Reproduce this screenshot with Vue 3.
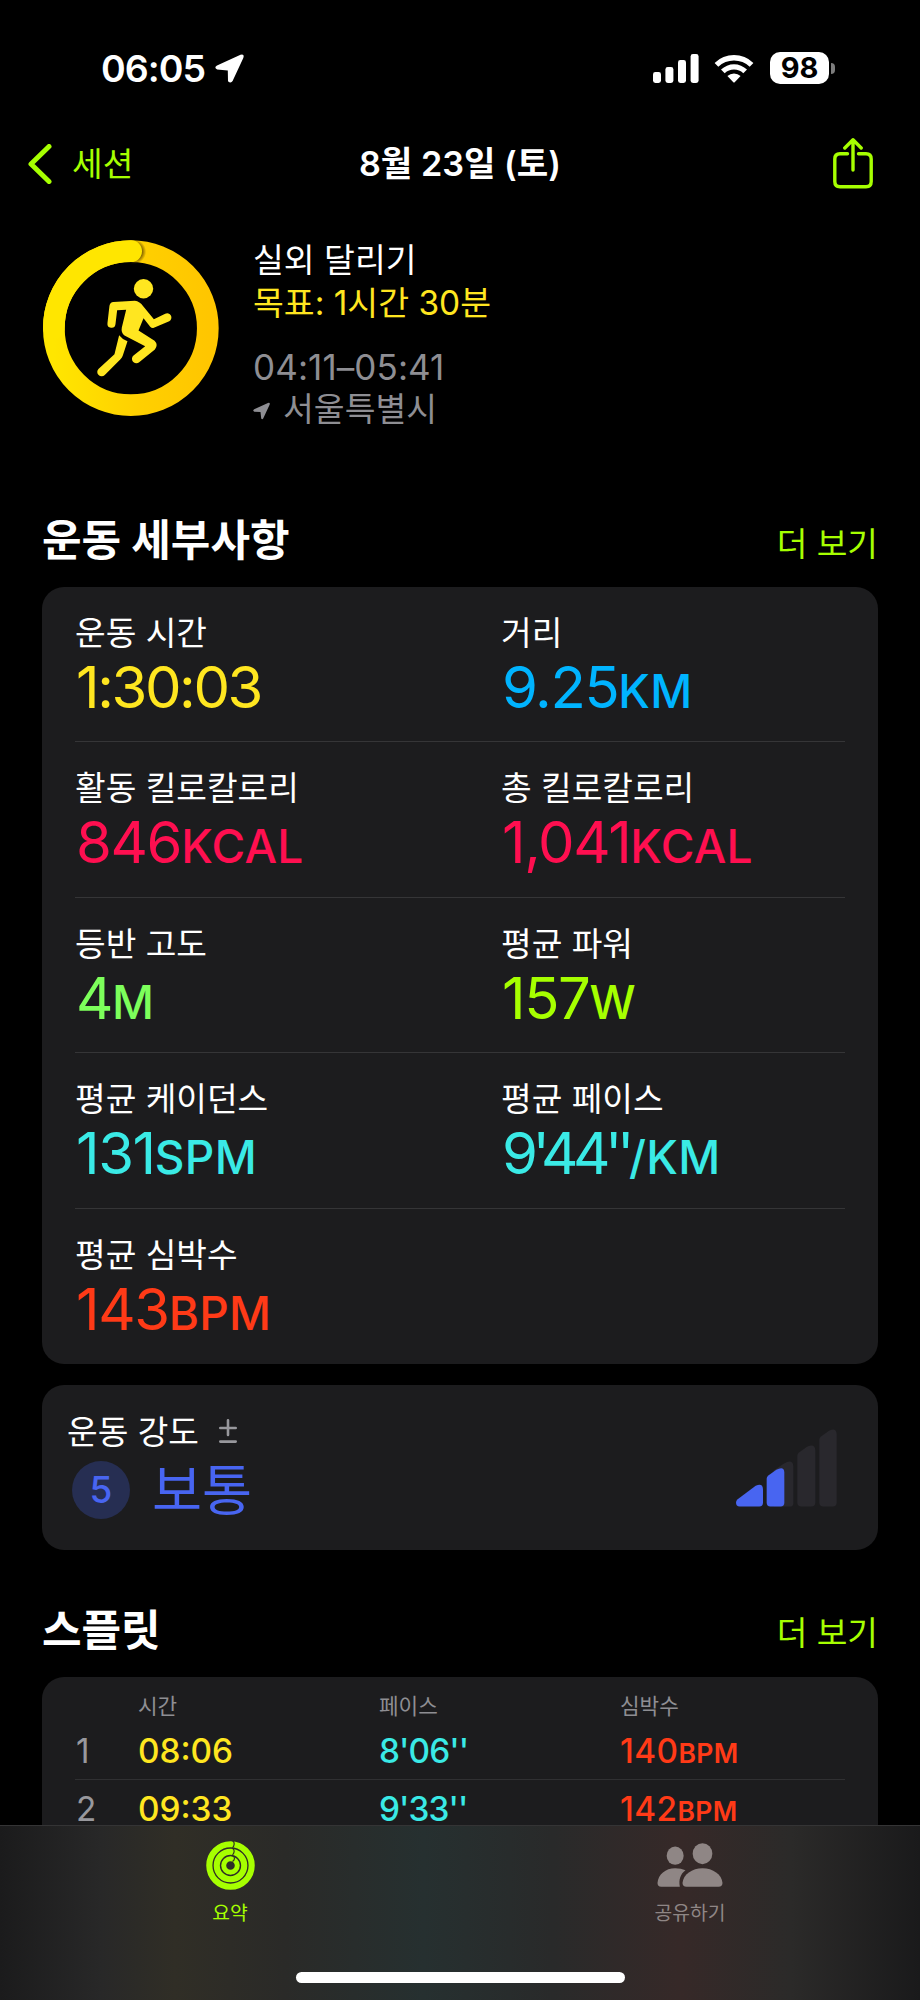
<template>
  <div class="screen">
    <div class="status-bar">
      <div class="status-left">
        <span class="clock">06:05</span>
        <svg class="arrow-icon" viewBox="0 0 29 29">
          <path d="M2 11.5 25.5 .8Q29.8-.4 28.3 4L17.6 27Q15.9 29.8 13 27.3L12.8 16.4 2.2 15.6Q-1.4 13.8 2 11.5Z" />
        </svg>
      </div>
      <div class="status-right">
        <svg class="signal-icon" viewBox="0 0 46 29">
          <rect x="0" y="18" width="8" height="11" rx="2.4" />
          <rect x="12.4" y="13" width="8" height="16" rx="2.4" />
          <rect x="25" y="6" width="8" height="23" rx="2.4" />
          <rect x="37.6" y="0" width="8" height="29" rx="2.4" />
        </svg>
        <svg class="wifi-icon" viewBox="0 0 40 29">
          <path d="M.6 8.9A28 28 0 0 1 39.4 8.9L35.7 12.8A22.6 22.6 0 0 0 4.3 12.8Z" />
          <path d="M7 15.5A18.8 18.8 0 0 1 33 15.5L29.3 19.3A13.5 13.5 0 0 0 10.7 19.3Z" />
          <path d="M13.4 22.1A9.6 9.6 0 0 1 26.6 22.1L20.7 28.2Q20 29 19.3 28.2Z" />
        </svg>
        <div class="battery">
          <span class="battery-body">98</span>
          <span class="battery-tip"></span>
        </div>
      </div>
    </div>

    <div class="nav-bar">
      <div class="nav-back">
        <svg class="chevron-icon" viewBox="0 0 24 40">
          <path d="M21 2.5 3 20 21 37.5" />
        </svg>
        <span class="nav-back-text">세션</span>
      </div>
      <h1 class="nav-title">8월 23일 (토)</h1>
      <svg class="share-icon" viewBox="0 0 40 51">
        <path d="M14.5 15.8H7Q1.8 15.8 1.8 21V43.5Q1.8 48.7 7 48.7H33Q38.2 48.7 38.2 43.5V21Q38.2 15.8 33 15.8H25.5" />
        <path d="M20 32V2.2M11.8 10 20 1.8 28.2 10" />
      </svg>
    </div>

    <div class="content">
      <section class="workout">
        <svg class="goal-ring" viewBox="70 60 527 527">
          <defs>
            <linearGradient id="ringFill" x1="1" y1="0" x2="0" y2="0">
              <stop offset="0" stop-color="#ffc600" />
              <stop offset="0.45" stop-color="#ffd000" />
              <stop offset="1" stop-color="#ffe600" />
            </linearGradient>
            <radialGradient id="capShade">
              <stop offset="0.6" stop-color="#5a4000" stop-opacity="0.9" />
              <stop offset="1" stop-color="#5a4000" stop-opacity="0" />
            </radialGradient>
          </defs>
          <circle cx="333" cy="324" r="230.5" fill="none" stroke="url(#ringFill)" stroke-width="65" />
          <circle cx="342" cy="95" r="37" fill="url(#capShade)" />
          <path d="M102.5 324A230.5 230.5 0 0 1 334 93.5" fill="none" stroke="#ffe600" stroke-width="65" stroke-linecap="round" />
          <g fill="#ffe620">
            <circle cx="371" cy="206" r="29" />
            <path d="M281 246 345 242Q360 244 370 258L402 297 436 281A12 12 0 0 1 448 303L402 323Q396 325 391 320L371 294 356 331 404 362Q416 374 405 388L358 426A13 13 0 0 1 341 406L376 378 314 346Q303 338 306 322L319 269 292 270 287 312A12 12 0 0 1 263 309L269 257Q271 247 281 246Z" />
            <path d="M298 345Q308 358 323 363L309 406Q307 412 302 417L255 464A13 13 0 0 1 236 446L284 402Z" />
          </g>
        </svg>
        <div class="workout-info">
          <p class="workout-name">실외 달리기</p>
          <p class="workout-goal">목표: 1시간 30분</p>
          <p class="workout-time">04:11–05:41</p>
          <p class="workout-place">
            <svg class="place-icon" viewBox="0 0 29 29">
              <path d="M2 11.5 25.5 .8Q29.8-.4 28.3 4L17.6 27Q15.9 29.8 14 27.3L12.8 16.4 2.2 15.6Q-1.4 13.8 2 11.5Z" />
            </svg>
            <span>서울특별시</span>
          </p>
        </div>
      </section>

      <div class="section-head">
        <h2>운동 세부사항</h2>
        <a class="more">더 보기</a>
      </div>
      <div class="card metrics">
        <div v-for="(row, i) in metrics" :key="i" class="metric-row">
          <div v-for="m in row" :key="m.label" class="metric">
            <p class="metric-label">{{ m.label }}</p>
            <p :class="['metric-value', m.tone, m.fit]">{{ m.value }}<span class="unit">{{ m.unit }}</span></p>
          </div>
        </div>
      </div>

      <div class="card effort">
        <div>
          <p class="effort-label">
            <span>운동 강도</span>
            <svg class="plus-minus" viewBox="0 0 18 25">
              <path d="M1.3 9H16.7M9 1.3V16M1.3 22.6H16.7" />
            </svg>
          </p>
          <p class="effort-value">
            <span class="effort-badge">5</span>
            <span>보통</span>
          </p>
        </div>
        <svg class="effort-bars" viewBox="167 176 303 233">
          <g fill="#29282d">
            <path d="M280 300 311 279Q338 264 339 288V398Q339 408 329 408H280Z" />
            <path d="M351 256Q351 250 356 246L380 229Q404 217 405 240V396Q405 408 393 408H363Q351 408 351 396Z" />
            <path d="M417 208Q417 202 422 198L446 181Q468 169 469 192V396Q469 408 457 408H429Q417 408 417 396Z" />
          </g>
          <g fill="#4865f1">
            <path d="M172 386 226 346Q247 336 248 356V397Q248 408 237 408H178Q167 408 167 396Q167 390 172 386Z" />
            <path d="M259 325Q259 319 264 315L288 298Q311 286 312 306V397Q312 408 301 408H270Q259 408 259 397Z" />
          </g>
        </svg>
      </div>

      <div class="section-head splits-head">
        <h2>스플릿</h2>
        <a class="more">더 보기</a>
      </div>
      <div class="card splits">
        <div class="split-row split-header">
          <span></span>
          <span>시간</span>
          <span>페이스</span>
          <span>심박수</span>
        </div>
        <div v-for="s in splits" :key="s.no" class="split-row">
          <span class="split-no">{{ s.no }}</span>
          <span class="yellow">{{ s.time }}</span>
          <span class="cyan split-pace">{{ s.pace }}</span>
          <span class="red split-bpm">{{ s.bpm }}<span class="split-unit">BPM</span></span>
        </div>
      </div>
    </div>

    <div class="tab-bar">
      <div class="tabs">
        <div class="tab active">
          <svg class="rings-icon" viewBox="616 542 148 148">
            <g class="rings">
              <circle cx="690" cy="616" r="64" />
              <circle cx="690" cy="616" r="41.5" />
              <circle cx="690" cy="616" r="20.5" />
            </g>
            <g class="gaps">
              <path d="M696 541Q702 545 701 552 700 559 696 562" />
              <path d="M696 564Q702 568 701 574 700 580 696 584" />
              <path d="M696 586Q703 590 702 595 701 601 696 604" />
            </g>
          </svg>
          <span>요약</span>
        </div>
        <div class="tab">
          <svg class="people-icon" viewBox="590 550 197 132">
            <ellipse cx="644" cy="588" rx="25.5" ry="27.5" />
            <ellipse cx="726" cy="582" rx="29.5" ry="31.5" />
            <path d="M602 681Q591 681 591 670C593 645 615 626 644 626Q662 626 675 632C660 643 654 660 658 681Z" />
            <path d="M678 681Q666 681 666 670C668 645 695 626 726 626C757 626 784 645 786 670Q786 681 774 681Z" />
          </svg>
          <span>공유하기</span>
        </div>
      </div>
      <div class="home-indicator"></div>
    </div>
  </div>
</template>

<script setup>
const metrics = [
  [
    { label: '운동 시간', value: '1:30:03', unit: '', tone: 'yellow', fit: 'duration' },
    { label: '거리', value: '9.25', unit: 'KM', tone: 'blue' },
  ],
  [
    { label: '활동 킬로칼로리', value: '846', unit: 'KCAL', tone: 'pink' },
    { label: '총 킬로칼로리', value: '1,041', unit: 'KCAL', tone: 'pink' },
  ],
  [
    { label: '등반 고도', value: '4', unit: 'M', tone: 'green' },
    { label: '평균 파워', value: '157', unit: 'W', tone: 'lime' },
  ],
  [
    { label: '평균 케이던스', value: '131', unit: 'SPM', tone: 'cyan' },
    { label: '평균 페이스', value: "9'44''", unit: '/KM', tone: 'cyan', fit: 'pace' },
  ],
  [{ label: '평균 심박수', value: '143', unit: 'BPM', tone: 'red' }],
]

const splits = [
  { no: 1, time: '08:06', pace: "8'06''", bpm: 140 },
  { no: 2, time: '09:33', pace: "9'33''", bpm: 142 },
]
</script>

<style>
body {
  background: #000;
}
</style>

<style scoped>
.screen {
  display: flex;
  flex-direction: column;
  width: 920px;
  height: 2000px;
  overflow: hidden;
  background: #000;
  color: #fff;
  font-family: Inter, 'Noto Sans CJK KR', sans-serif;
  font-size: 33.3px;
}

p,
h1,
h2 {
  margin: 0;
}

svg {
  display: block;
  flex-shrink: 0;
}

.status-bar {
  display: flex;
  justify-content: space-between;
  align-items: center;
  height: 136px;
  padding: 0 85px 0 101px;
  box-sizing: border-box;
  flex-shrink: 0;
}

.status-left,
.status-right {
  display: flex;
  align-items: center;
}

.clock {
  width: 114px;
  font-size: 37.5px;
  font-weight: 600;
  letter-spacing: -1px;
}

.arrow-icon {
  width: 29px;
  height: 29px;
  fill: #fff;
}

.signal-icon {
  width: 46px;
  height: 29px;
  margin-right: 15px;
  fill: #fff;
}

.wifi-icon {
  width: 40px;
  height: 29px;
  margin-right: 16px;
  fill: #fff;
}

.battery {
  display: flex;
  align-items: center;
  gap: 2px;
}

.battery-body {
  width: 59px;
  height: 32px;
  border-radius: 10px;
  background: #fff;
  color: #000;
  font-size: 29px;
  font-weight: 700;
  line-height: 32px;
  text-align: center;
}

.battery-tip {
  width: 4px;
  height: 11px;
  border-radius: 0 5px 5px 0;
  background: #7c7c7c;
}

.nav-bar {
  display: grid;
  grid-template-columns: 1fr auto 1fr;
  align-items: center;
  height: 56px;
  padding: 0 47px 0 28px;
  flex-shrink: 0;
}

.nav-back {
  display: flex;
  align-items: center;
  gap: 20px;
  color: #a6ff00;
}

.nav-back-text {
  line-height: 40px;
}

.chevron-icon {
  width: 24px;
  height: 40px;
  fill: none;
  stroke: #a6ff00;
  stroke-width: 5;
  stroke-linecap: round;
  stroke-linejoin: round;
}

.nav-title {
  padding-left: 19px;
  font-size: 34.2px;
  font-weight: 600;
  line-height: 44px;
}

.share-icon {
  justify-self: end;
  width: 40px;
  height: 51px;
  margin-bottom: 2px;
  fill: none;
  stroke: #a6ff00;
  stroke-width: 3.4;
  stroke-linecap: round;
  stroke-linejoin: round;
}

.content {
  flex: 1;
  min-height: 0;
  overflow: hidden;
  padding: 0 42px;
}

.workout {
  display: flex;
  gap: 34px;
  height: 313px;
  padding-top: 47px;
  box-sizing: border-box;
}

.goal-ring {
  width: 176px;
  height: 176px;
  margin: 1px 0 0 1px;
}

.workout-info {
  font-size: 33.5px;
  line-height: 42px;
}

.workout-goal {
  margin-top: 1px;
  color: #ffe620;
}

.workout-time {
  margin-top: 22px;
  font-size: 35px;
  letter-spacing: 0.1px;
}

.workout-time,
.workout-place {
  color: #8e8e93;
}

.workout-place {
  display: flex;
  align-items: center;
  gap: 13px;
}

.place-icon {
  width: 17px;
  height: 18px;
  margin-top: 3px;
  fill: #8e8e93;
}

.section-head {
  display: flex;
  justify-content: space-between;
  align-items: center;
  height: 82px;
  padding-bottom: 5px;
  box-sizing: border-box;
}

.section-head h2 {
  padding-bottom: 7px;
  font-size: 43px;
  font-weight: 700;
  line-height: 60px;
}

.more {
  line-height: 40px;
  color: #a6ff00;
}

.card {
  border-radius: 22px;
  background: #1c1c1e;
}

.metrics {
  padding: 0 33px;
}

.metric-row {
  display: grid;
  grid-template-columns: 426px 1fr;
  height: 155.4px;
  padding-top: 26px;
  box-sizing: border-box;
  border-bottom: 1px solid #353537;
}

.metric-row:last-child {
  border-bottom: none;
}

.metric-label {
  line-height: 40px;
}

.metric-value {
  margin-top: 7px;
  padding-left: 1px;
  font-size: 58px;
  line-height: 54px;
  letter-spacing: -1.4px;
  white-space: nowrap;
}

.metric-value.duration {
  letter-spacing: -2.4px;
}

/* the prime marks sit close to the digits */
.metric-value.pace {
  letter-spacing: -5.4px;
}

.unit {
  font-size: 46px;
  font-weight: 500;
  letter-spacing: 0.3px;
}

.yellow {
  color: #ffe620;
}
.blue {
  color: #00b4ff;
}
.pink {
  color: #ff0f50;
}
.green {
  color: #7dff5b;
}
.lime {
  color: #a6ff00;
}
.cyan {
  color: #3aeae6;
}
.red {
  color: #ff3a17;
}

.effort {
  display: flex;
  justify-content: space-between;
  height: 165px;
  margin-top: 21px;
  padding: 27px 41px 0 25px;
  box-sizing: border-box;
}

.effort-label {
  display: flex;
  align-items: center;
  gap: 20px;
  line-height: 40px;
}

.plus-minus {
  width: 18px;
  height: 25px;
  fill: none;
  stroke: #98989d;
  stroke-width: 2.6;
  stroke-linecap: round;
}

.effort-value {
  display: flex;
  align-items: center;
  gap: 22px;
  margin: 9px 0 0 5px;
  color: #4865f1;
  font-size: 54.4px;
  line-height: 58px;
}

.effort-badge {
  width: 58px;
  height: 58px;
  border-radius: 50%;
  background: #262e52;
  font-size: 37px;
  font-weight: 500;
  text-align: center;
}

.effort-bars {
  width: 101px;
  height: 78px;
  margin-top: 17px;
}

.splits-head {
  height: 127px;
  padding-top: 45px;
}

.splits {
  height: 240px;
  padding: 9px 33px 0;
}

.split-row {
  display: grid;
  grid-template-columns: 63px 241px 241px 1fr;
  height: 58.5px;
  box-sizing: border-box;
  border-bottom: 1px solid #303032;
  font-weight: 500;
  line-height: 59px;
}

.split-header {
  height: 36px;
  border-bottom: none;
  color: #8e8e93;
  font-size: 21.3px;
  font-weight: 400;
  line-height: 40px;
}

.split-no {
  padding-left: 1px;
  color: #98989d;
  font-weight: 400;
}

.split-pace {
  letter-spacing: -0.9px;
}

.split-bpm {
  letter-spacing: 0.4px;
}

.split-unit {
  font-size: 26.5px;
  font-weight: 600;
}

.tab-bar {
  height: 175px;
  box-sizing: border-box;
  flex-shrink: 0;
  border-top: 1px solid #343435;
  background: linear-gradient(
    90deg,
    #1b1b1c 0%,
    #282828 11%,
    #302e26 19%,
    #2a2a28 31%,
    #263030 46%,
    #292a2a 60%,
    #362928 74%,
    #2b2a29 86%,
    #1a1a1b 100%
  );
}

.tabs {
  display: grid;
  grid-template-columns: 1fr 1fr;
  height: 146px;
}

.tab {
  display: flex;
  flex-direction: column;
  align-items: center;
  padding-top: 15px;
  color: #8f8685;
  font-size: 19.3px;
  line-height: 26px;
}

.tab.active {
  color: #a6ff00;
}

.rings-icon {
  width: 49px;
  height: 49px;
  margin-bottom: 10px;
}

.rings circle {
  fill: none;
  stroke: #a6ff00;
  stroke-width: 18.5;
}

.rings circle:last-child {
  stroke-width: 15;
}

.gaps path {
  fill: none;
  stroke: #2f2d26;
  stroke-width: 3.5;
}

.people-icon {
  width: 66px;
  height: 44px;
  margin: 2px 0 13px;
  fill: #8f8685;
}

.home-indicator {
  width: 329px;
  height: 11px;
  margin: 0 auto;
  border-radius: 6px;
  background: #fff;
}
</style>
